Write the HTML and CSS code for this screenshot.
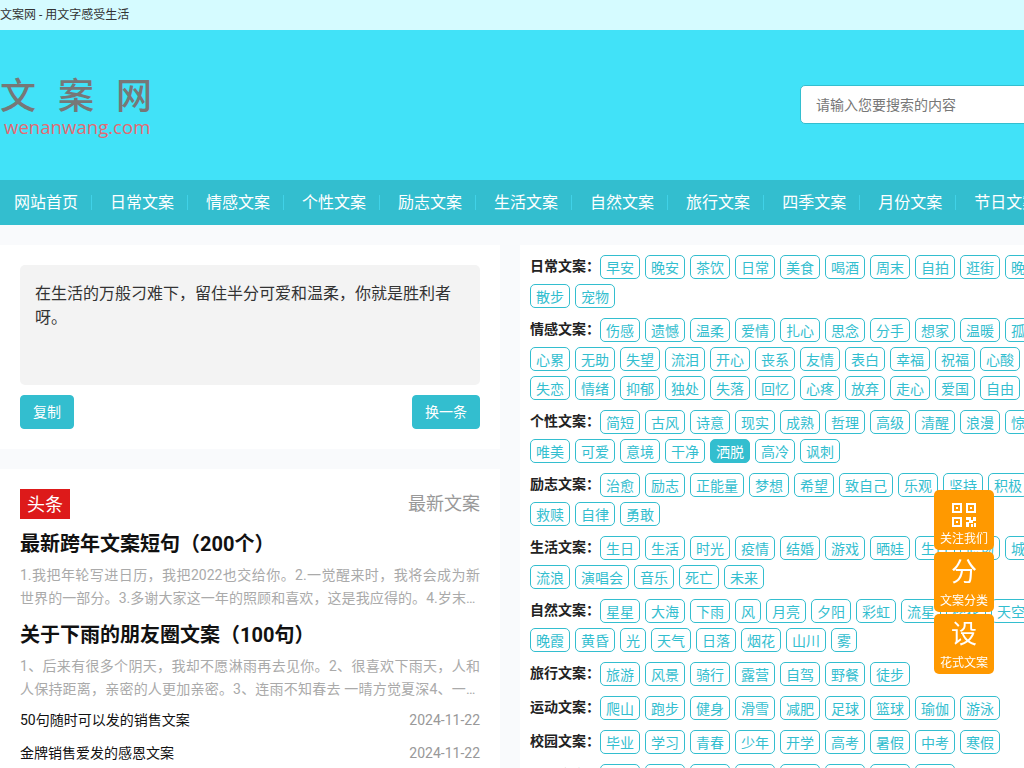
FILE: index.html
```html
<!DOCTYPE html>
<html lang="zh-CN">
<head>
  <meta charset="UTF-8">
  <title>文案网 - 用文字感受生活</title>
  <link rel="stylesheet" href="styles.css">
</head>
<body>
<div class="page">

  <div class="topbar">文案网 - 用文字感受生活</div>

  <header class="header">
    <a class="logo" href="#">
      <span class="logo-cn">文案网</span>
      <span class="logo-en">wenanwang.com</span>
    </a>
    <input class="search" type="text" placeholder="请输入您要搜索的内容">
  </header>

  <nav class="nav">
    <a href="#">网站首页</a>
    <a href="#">日常文案</a>
    <a href="#">情感文案</a>
    <a href="#">个性文案</a>
    <a href="#">励志文案</a>
    <a href="#">生活文案</a>
    <a href="#">自然文案</a>
    <a href="#">旅行文案</a>
    <a href="#">四季文案</a>
    <a href="#">月份文案</a>
    <a href="#">节日文案</a>
  </nav>

  <main class="main">
    <div class="left">
      <section class="card quote-card">
        <div class="quote">在生活的万般刁难下，留住半分可爱和温柔，你就是胜利者呀。</div>
        <div class="quote-btns">
          <button class="btn">复制</button>
          <button class="btn">换一条</button>
        </div>
      </section>

      <section class="card news-card">
        <div class="news-head">
          <span class="badge">头条</span>
          <span class="news-more">最新文案</span>
        </div>

        <h2 class="news-title">最新跨年文案短句（200个）</h2>
        <p class="news-text">1.我把年轮写进日历，我把2022也交给你。2.一觉醒来时，我将会成为新世界的一部分。3.多谢大家这一年的照顾和喜欢，这是我应得的。4.岁末将至，愿你所有的期待都不被辜负，所有的努力都有回报。</p>

        <h2 class="news-title">关于下雨的朋友圈文案（100句）</h2>
        <p class="news-text">1、后来有很多个阴天，我却不愿淋雨再去见你。2、很喜欢下雨天，人和人保持距离，亲密的人更加亲密。3、连雨不知春去 一晴方觉夏深4、一场秋雨一场寒，十场秋雨要穿棉。</p>

        <ul class="news-list">
          <li><a href="#">50句随时可以发的销售文案</a><span>2024-11-22</span></li>
          <li><a href="#">金牌销售爱发的感恩文案</a><span>2024-11-22</span></li>
          <li><a href="#">适合销售发朋友圈的文案</a><span>2024-11-22</span></li>
        </ul>
      </section>
    </div>

    <aside class="right">
      <div class="tag-group">
        <b class="tag-label">日常文案：</b>
        <a class="tag" href="#">早安</a><a class="tag" href="#">晚安</a><a class="tag" href="#">茶饮</a><a class="tag" href="#">日常</a><a class="tag" href="#">美食</a><a class="tag" href="#">喝酒</a><a class="tag" href="#">周末</a><a class="tag" href="#">自拍</a><a class="tag" href="#">逛街</a><a class="tag" href="#">晚风</a><a class="tag" href="#">散步</a><a class="tag" href="#">宠物</a>
      </div>
      <div class="tag-group">
        <b class="tag-label">情感文案：</b>
        <a class="tag" href="#">伤感</a><a class="tag" href="#">遗憾</a><a class="tag" href="#">温柔</a><a class="tag" href="#">爱情</a><a class="tag" href="#">扎心</a><a class="tag" href="#">思念</a><a class="tag" href="#">分手</a><a class="tag" href="#">想家</a><a class="tag" href="#">温暖</a><a class="tag" href="#">孤独</a><a class="tag" href="#">心累</a><a class="tag" href="#">无助</a><a class="tag" href="#">失望</a><a class="tag" href="#">流泪</a><a class="tag" href="#">开心</a><a class="tag" href="#">丧系</a><a class="tag" href="#">友情</a><a class="tag" href="#">表白</a><a class="tag" href="#">幸福</a><a class="tag" href="#">祝福</a><a class="tag" href="#">心酸</a><a class="tag" href="#">失恋</a><a class="tag" href="#">情绪</a><a class="tag" href="#">抑郁</a><a class="tag" href="#">独处</a><a class="tag" href="#">失落</a><a class="tag" href="#">回忆</a><a class="tag" href="#">心疼</a><a class="tag" href="#">放弃</a><a class="tag" href="#">走心</a><a class="tag" href="#">爱国</a><a class="tag" href="#">自由</a>
      </div>
      <div class="tag-group">
        <b class="tag-label">个性文案：</b>
        <a class="tag" href="#">简短</a><a class="tag" href="#">古风</a><a class="tag" href="#">诗意</a><a class="tag" href="#">现实</a><a class="tag" href="#">成熟</a><a class="tag" href="#">哲理</a><a class="tag" href="#">高级</a><a class="tag" href="#">清醒</a><a class="tag" href="#">浪漫</a><a class="tag" href="#">惊艳</a><a class="tag" href="#">唯美</a><a class="tag" href="#">可爱</a><a class="tag" href="#">意境</a><a class="tag" href="#">干净</a><a class="tag active" href="#">洒脱</a><a class="tag" href="#">高冷</a><a class="tag" href="#">讽刺</a>
      </div>
      <div class="tag-group">
        <b class="tag-label">励志文案：</b>
        <a class="tag" href="#">治愈</a><a class="tag" href="#">励志</a><a class="tag" href="#">正能量</a><a class="tag" href="#">梦想</a><a class="tag" href="#">希望</a><a class="tag" href="#">致自己</a><a class="tag" href="#">乐观</a><a class="tag" href="#">坚持</a><a class="tag" href="#">积极</a><a class="tag" href="#">救赎</a><a class="tag" href="#">自律</a><a class="tag" href="#">勇敢</a>
      </div>
      <div class="tag-group">
        <b class="tag-label">生活文案：</b>
        <a class="tag" href="#">生日</a><a class="tag" href="#">生活</a><a class="tag" href="#">时光</a><a class="tag" href="#">疫情</a><a class="tag" href="#">结婚</a><a class="tag" href="#">游戏</a><a class="tag" href="#">晒娃</a><a class="tag" href="#">生肖</a><a class="tag" href="#">职场</a><a class="tag" href="#">城市</a><a class="tag" href="#">流浪</a><a class="tag" href="#">演唱会</a><a class="tag" href="#">音乐</a><a class="tag" href="#">死亡</a><a class="tag" href="#">未来</a>
      </div>
      <div class="tag-group">
        <b class="tag-label">自然文案：</b>
        <a class="tag" href="#">星星</a><a class="tag" href="#">大海</a><a class="tag" href="#">下雨</a><a class="tag" href="#">风</a><a class="tag" href="#">月亮</a><a class="tag" href="#">夕阳</a><a class="tag" href="#">彩虹</a><a class="tag" href="#">流星</a><a class="tag" href="#">樱花</a><a class="tag" href="#">天空</a><a class="tag" href="#">晚霞</a><a class="tag" href="#">黄昏</a><a class="tag" href="#">光</a><a class="tag" href="#">天气</a><a class="tag" href="#">日落</a><a class="tag" href="#">烟花</a><a class="tag" href="#">山川</a><a class="tag" href="#">雾</a>
      </div>
      <div class="tag-group">
        <b class="tag-label">旅行文案：</b>
        <a class="tag" href="#">旅游</a><a class="tag" href="#">风景</a><a class="tag" href="#">骑行</a><a class="tag" href="#">露营</a><a class="tag" href="#">自驾</a><a class="tag" href="#">野餐</a><a class="tag" href="#">徒步</a>
      </div>
      <div class="tag-group">
        <b class="tag-label">运动文案：</b>
        <a class="tag" href="#">爬山</a><a class="tag" href="#">跑步</a><a class="tag" href="#">健身</a><a class="tag" href="#">滑雪</a><a class="tag" href="#">减肥</a><a class="tag" href="#">足球</a><a class="tag" href="#">篮球</a><a class="tag" href="#">瑜伽</a><a class="tag" href="#">游泳</a>
      </div>
      <div class="tag-group">
        <b class="tag-label">校园文案：</b>
        <a class="tag" href="#">毕业</a><a class="tag" href="#">学习</a><a class="tag" href="#">青春</a><a class="tag" href="#">少年</a><a class="tag" href="#">开学</a><a class="tag" href="#">高考</a><a class="tag" href="#">暑假</a><a class="tag" href="#">中考</a><a class="tag" href="#">寒假</a>
      </div>
      <div class="tag-group">
        <b class="tag-label">节日文案：</b>
        <a class="tag" href="#">春节</a><a class="tag" href="#">元宵</a><a class="tag" href="#">清明</a><a class="tag" href="#">端午</a><a class="tag" href="#">七夕</a><a class="tag" href="#">中秋</a><a class="tag" href="#">国庆</a><a class="tag" href="#">跨年</a>
      </div>
    </aside>
  </main>

  <div class="float-bar">
    <a class="float-item" href="#">
      <svg class="float-qr" width="24" height="24" viewBox="0 0 24 24" fill="#fff">
        <path fill-rule="evenodd" d="M0 0h10v10H0zM2 2v6h6V2zM14 0h10v10H14zM16 2v6h6V2zM0 14h10v10H0zM2 16v6h6v-6z"/>
        <rect x="4" y="4" width="2" height="2"/>
        <rect x="18" y="4" width="2" height="2"/>
        <rect x="4" y="18" width="2" height="2"/>
        <rect x="14" y="14" width="5" height="3"/>
        <rect x="21" y="14" width="3" height="4"/>
        <rect x="17" y="17" width="4" height="3"/>
        <rect x="14" y="19" width="3" height="5"/>
        <rect x="19" y="21" width="2" height="3"/>
        <rect x="22" y="20" width="2" height="4"/>
      </svg>
      <span class="float-label">关注我们</span>
    </a>
    <a class="float-item" href="#">
      <span class="float-glyph">分</span>
      <span class="float-label">文案分类</span>
    </a>
    <a class="float-item" href="#">
      <span class="float-glyph">设</span>
      <span class="float-label">花式文案</span>
    </a>
  </div>

</div>
</body>
</html>
```

FILE: styles.css
```css
html {
  overflow: hidden;
}

body {
  margin: 0;
  background-color: #f9fafc;
  font-family: Roboto, "Noto Sans CJK SC", sans-serif;
  font-size: 14px;
  color: #333;
}

a {
  color: inherit;
  text-decoration: none;
}

.page {
  width: 1050px;
}

/* top */
.topbar {
  height: 30px;
  line-height: 30px;
  font-size: 12px;
  background-color: #d5fbff;
}

.header {
  height: 150px;
  background-color: #41e2f8;
  display: flex;
  align-items: center;
  justify-content: space-between;
}

.logo {
  display: flex;
  flex-direction: column;
  margin-top: 2px;
}

.logo-cn {
  font-size: 36px;
  font-weight: 500;
  line-height: 44px;
  letter-spacing: 22px;
  color: #777;
}

.logo-en {
  font-family: "Open Sans", sans-serif;
  font-size: 18.6px;
  font-weight: 500;
  line-height: 22px;
  margin-top: -3px;
  padding-left: 4px;
  color: #e46a72;
}

.search {
  box-sizing: border-box;
  width: 250px;
  height: 39px;
  margin-top: -1px;
  padding: 0 15px;
  border: 1px solid #33becf;
  border-radius: 5px;
  background-color: #fff;
  font-family: inherit;
  font-size: 14px;
}

.search::placeholder {
  color: #777;
}

/* nav */
.nav {
  height: 45px;
  display: flex;
  align-items: center;
  gap: 4px;
  background-color: #33becf;
  white-space: nowrap;
}

.nav a {
  padding: 0 13px 0 14px;
  font-size: 16px;
  line-height: 15px;
  color: #fff;
  border-right: 1px solid #40d2e8;
}

/* main */
.main {
  display: flex;
  gap: 20px;
  align-items: flex-start;
  margin-top: 20px;
}

.left {
  width: 500px;
  display: flex;
  flex-direction: column;
  gap: 20px;
}

.card {
  padding: 20px;
  background-color: #fff;
}

.quote {
  box-sizing: border-box;
  height: 120px;
  padding: 17px 15px;
  border-radius: 5px;
  background-color: #f3f3f3;
  font-size: 16px;
  line-height: 24px;
}

.quote-btns {
  display: flex;
  justify-content: space-between;
  margin-top: 10px;
}

.btn {
  height: 34px;
  padding: 0 12px 2px;
  border: 1px solid #33becf;
  border-radius: 4px;
  background-color: #33becf;
  color: #fff;
  font-family: inherit;
  font-size: 14px;
}

.news-head {
  display: flex;
  justify-content: space-between;
  align-items: center;
}

.badge {
  width: 50px;
  height: 30px;
  line-height: 32px;
  text-align: center;
  font-size: 18px;
  color: #fff;
  background-color: #dd1a1a;
}

.news-more {
  font-size: 18px;
  line-height: 30px;
  color: #999;
}

.news-title {
  margin: 10px 0 0;
  font-size: 20px;
  line-height: 30px;
  font-weight: bold;
  color: #111;
}

.news-text {
  margin: 5px 0 0;
  font-size: 14px;
  line-height: 23px;
  color: #aaa;
  text-align: justify;
  display: -webkit-box;
  -webkit-box-orient: vertical;
  -webkit-line-clamp: 2;
  overflow: hidden;
}

.news-list {
  list-style: none;
  margin: 3px 0 0;
  padding: 0;
}

.news-list li {
  display: flex;
  justify-content: space-between;
  line-height: 33px;
  color: #111;
}

.news-list span {
  color: #999;
}

/* tags */
.right {
  box-sizing: border-box;
  width: 530px;
  padding: 10px 0 10px 10px;
  background-color: #fff;
}

.tag-group {
  display: flex;
  flex-wrap: wrap;
  margin-bottom: 5px;
}

.tag-label {
  width: 70px;
  line-height: 22px;
  color: #222;
}

.tag {
  height: 22px;
  line-height: 24px;
  margin: 0 5px 5px 0;
  padding: 0 5px;
  border: 1px solid #33becf;
  border-radius: 5px;
  color: #33becf;
}

.tag.active {
  background-color: #33becf;
  color: #fff;
}

/* floating buttons */
.float-bar {
  position: fixed;
  left: 934px;
  top: 490px;
  display: flex;
  flex-direction: column;
  gap: 2px;
}

.float-item {
  box-sizing: border-box;
  width: 60px;
  height: 60px;
  border-radius: 5px;
  background-color: #ff9900;
  color: #fff;
  display: flex;
  flex-direction: column;
  align-items: center;
  justify-content: flex-end;
  padding-bottom: 2px;
}

.float-qr {
  margin-bottom: 3px;
}

.float-glyph {
  font-size: 26px;
  line-height: 34px;
  margin-bottom: 3px;
}

.float-label {
  font-size: 12px;
  line-height: 18px;
}
```
